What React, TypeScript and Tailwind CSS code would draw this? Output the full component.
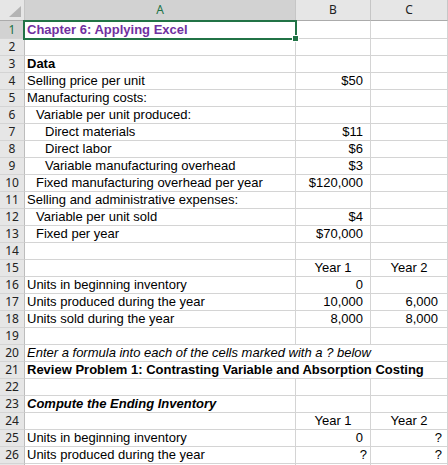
import React from "react";

type Row = {
  n: number;
  a?: string;
  b?: string;
  c?: string;
  span?: string;
  indent?: number;
  kind?: "title" | "bold" | "italic" | "boldItalic";
  center?: boolean;
  hideNum?: boolean;
};

const rows: Row[] = [
  { n: 1, a: "Chapter 6: Applying Excel", kind: "title" },
  { n: 2 },
  { n: 3, a: "Data", kind: "bold" },
  { n: 4, a: "Selling price per unit", b: "$50" },
  { n: 5, a: "Manufacturing costs:" },
  { n: 6, a: "Variable per unit produced:", indent: 1 },
  { n: 7, a: "Direct materials", indent: 2, b: "$11" },
  { n: 8, a: "Direct labor", indent: 2, b: "$6" },
  { n: 9, a: "Variable manufacturing overhead", indent: 2, b: "$3" },
  { n: 10, a: "Fixed manufacturing overhead per year", indent: 1, b: "$120,000" },
  { n: 11, a: "Selling and administrative expenses:" },
  { n: 12, a: "Variable per unit sold", indent: 1, b: "$4" },
  { n: 13, a: "Fixed per year", indent: 1, b: "$70,000" },
  { n: 14 },
  { n: 15, b: "Year 1", c: "Year 2", center: true },
  { n: 16, a: "Units in beginning inventory", b: "0" },
  { n: 17, a: "Units produced during the year", b: "10,000", c: "6,000" },
  { n: 18, a: "Units sold during the year", b: "8,000", c: "8,000" },
  { n: 19 },
  { n: 20, span: "Enter a formula into each of the cells marked with a ? below", kind: "italic" },
  { n: 21, span: "Review Problem 1: Contrasting Variable and Absorption Costing", kind: "bold" },
  { n: 22 },
  { n: 23, a: "Compute the Ending Inventory", kind: "boldItalic" },
  { n: 24, b: "Year 1", c: "Year 2", center: true },
  { n: 25, a: "Units in beginning inventory", b: "0", c: "?" },
  { n: 26, a: "Units produced during the year", b: "?", c: "?" },
  // only the top sliver of row 27 is in view
  { n: 27, hideNum: true },
];

const kindClass = (kind?: Row["kind"]) => {
  if (kind === "title") return "font-bold text-[#7030a0]";
  if (kind === "bold") return "font-bold";
  if (kind === "italic") return "italic";
  if (kind === "boldItalic") return "font-bold italic";
  return "";
};

const indentClass = (indent?: number) => {
  if (indent === 1) return "pl-[11px]";
  if (indent === 2) return "pl-[20px]";
  return "pl-[2px]";
};

const App: React.FC = () => {
  const cell = "border-r border-b border-[#d4d4d4] whitespace-nowrap overflow-hidden";

  return (
    <div className="relative w-[448px] h-[465px] overflow-hidden bg-white font-['Liberation_Sans',Arial,sans-serif] text-[13px] text-black">
      {/* Column headers */}
      <div className="grid grid-cols-[25px_271px_75px_77px] h-[21px] font-['Noto_Sans',sans-serif] text-[12px] text-[#222]">
        <div className="bg-[#e6e6e6] border-r border-b border-r-[#c6c6c6] border-b-[#ababab]">
          <svg width="24" height="20" viewBox="0 0 24 20">
            <polygon points="9,17 21,17 21,6" fill="#b4b4b4" />
          </svg>
        </div>
        <div className="bg-[#d2d2d2] border-r border-b border-r-[#c6c6c6] border-b-[#ababab] flex items-center justify-center text-[#217346]">
          A
        </div>
        <div className="bg-[#e6e6e6] border-r border-b border-r-[#c6c6c6] border-b-[#ababab] flex items-center justify-center">
          B
        </div>
        <div className="bg-[#e6e6e6] border-r border-b border-r-[#c6c6c6] border-b-[#ababab] flex items-center justify-center">
          C
        </div>
      </div>

      {rows.map((r) => {
        const h = r.n === 1 ? "h-[18px] leading-[17px]" : "h-[17px] leading-[16px]";
        const numPadB = r.b === "?" ? "pr-[3px]" : "pr-[7px]";
        const numPadC = r.c === "?" ? "pr-[5px]" : "pr-[9px]";
        return (
          <div key={r.n} className={`grid grid-cols-[25px_271px_75px_77px] ${h}`}>
            <div
              className={`border-r border-b border-r-[#bdbdbd] border-b-[#d4d4d4] font-['Noto_Sans',sans-serif] text-[12px] text-center ${
                r.n === 1 ? "bg-[#d2d2d2] text-[#217346]" : "bg-[#e6e6e6] text-[#222]"
              }`}
            >
              {r.hideNum ? null : r.n}
            </div>
            {r.span ? (
              <div className={`${cell} col-span-3 pl-[2px] overflow-visible ${kindClass(r.kind)}`}>{r.span}</div>
            ) : (
              <>
                <div className={`${cell} ${indentClass(r.indent)} ${kindClass(r.kind)}`}>{r.a}</div>
                <div className={`${cell} ${r.center ? "text-center" : `text-right ${numPadB}`}`}>{r.b}</div>
                <div className={`${cell} ${r.center ? "text-center" : `text-right ${numPadC}`}`}>{r.c}</div>
              </>
            )}
          </div>
        );
      })}

      {/* Active cell selection on A1 */}
      <div className="absolute left-[23px] top-[20px] w-[274px] h-[20px] border-2 border-[#217346] pointer-events-none" />
      <div className="absolute left-[293px] top-[36px] w-[5px] h-[5px] bg-[#217346] outline outline-1 outline-white pointer-events-none" />
    </div>
  );
};

export default App;
